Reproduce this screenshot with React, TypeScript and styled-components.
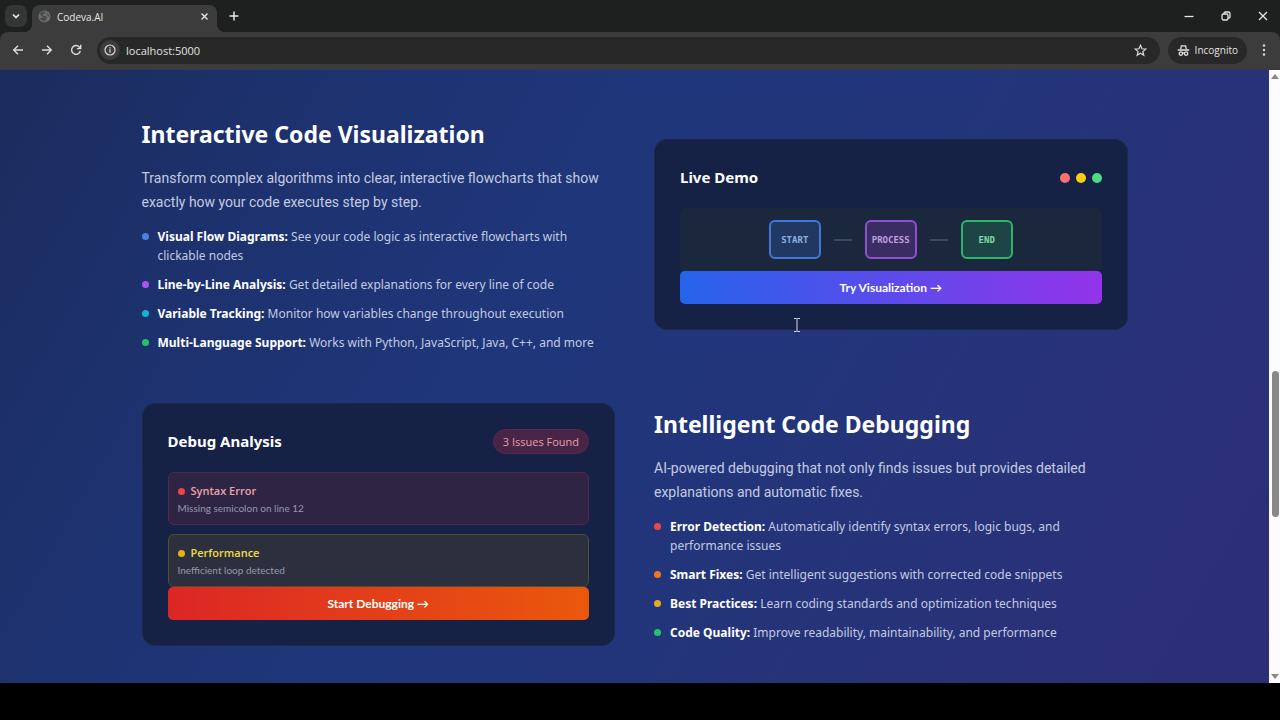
import React from "react";
import styled, { createGlobalStyle } from "styled-components";

const GlobalStyle = createGlobalStyle`
  *, *::before, *::after { box-sizing: border-box; }
  html, body { margin: 0; background: #000; }
  body, button, input { font-family: "Open Sans", "Noto Sans", sans-serif; }
  button { border: 0; padding: 0; margin: 0; background: none; color: inherit; cursor: pointer; }
  h2, h3, h4, p, ul { margin: 0; padding: 0; }
  ul { list-style: none; }
`;

const Window = styled.div`
  min-height: 100vh;
  display: flex;
  flex-direction: column;
  padding-bottom: 37px;
  background: #000;
`;

/* Browser frame */

const TabStrip = styled.header`
  height: 32px;
  display: flex;
  align-items: flex-start;
  padding: 5px 0 0 5px;
  background: #1e2020;
  color: #e6e6e6;
`;

const TabSearch = styled.button`
  width: 22px;
  height: 22px;
  display: grid;
  place-items: center;
  border-radius: 7px;
  background: #343535;
`;

const Tab = styled.div`
  position: relative;
  width: 185px;
  height: 27px;
  margin-left: 5px;
  padding: 0 6px 4px;
  display: flex;
  align-items: center;
  gap: 6px;
  border-radius: 8px 8px 0 0;
  background: #3c3c3c;
  font-size: 10px;

  &::before,
  &::after {
    content: "";
    position: absolute;
    bottom: 0;
    width: 8px;
    height: 8px;
  }
  &::before {
    left: -8px;
    background: radial-gradient(circle at 0 0, transparent 8px, #3c3c3c 8px);
  }
  &::after {
    right: -8px;
    background: radial-gradient(circle at 100% 0, transparent 8px, #3c3c3c 8px);
  }
`;

const TabTitle = styled.span`
  flex: 1;
`;

const IconButton = styled.button<{ $size?: number }>`
  width: ${({ $size = 14 }) => $size}px;
  height: ${({ $size = 14 }) => $size}px;
  display: grid;
  place-items: center;
  flex: none;
`;

const NewTab = styled(IconButton)`
  margin-left: 6px;
`;

const WindowControls = styled.div`
  margin-left: auto;
  display: flex;
  gap: 15px;
  padding-right: 6px;
`;

const Toolbar = styled.div`
  background: #1e2020;
`;

const ToolbarInner = styled.div`
  height: 38px;
  display: flex;
  align-items: center;
  padding: 0 7px 1px;
  border-radius: 8px 8px 0 0;
  border-bottom: 1px solid #34384a;
  background: #3c3c3c;
  color: #dcdcdc;
`;

const NavButtons = styled.nav`
  display: flex;
  gap: 7px;
  margin-right: 10px;
`;

const AddressBar = styled.div`
  flex: 1;
  min-width: 0;
  height: 27px;
  display: flex;
  align-items: center;
  gap: 6px;
  padding: 0 8px 0 3px;
  border-radius: 14px;
  background: #282828;
`;

const SiteInfo = styled(IconButton)`
  border-radius: 50%;
  background: #3c3c3c;
`;

const AddressInput = styled.input`
  flex: 1;
  min-width: 0;
  border: 0;
  outline: 0;
  padding: 0;
  background: transparent;
  color: #e3e3e3;
  font-size: 11px;
`;

const Incognito = styled.button`
  height: 27px;
  display: flex;
  align-items: center;
  gap: 5px;
  margin: 0 8px;
  padding: 0 9px;
  border-radius: 14px;
  background: #282828;
  color: #e3e3e3;
  font-size: 10px;
`;

const Viewport = styled.div`
  flex: 1;
  display: flex;
`;

const Scrollbar = styled.div`
  width: 11px;
  display: flex;
  flex-direction: column;
  align-items: center;
  padding: 4px 0 4px 1px;
  background: #fcfcfc;
`;

const Track = styled.div`
  flex: 1;
  width: 7px;
  display: flex;
  flex-direction: column;
  margin: 4px 0;
`;

const TrackSpace = styled.div`
  flex: 49 0 0;
`;

const Thumb = styled.div`
  flex: 25 0 0;
  border-radius: 4px;
  background: #888;
`;

const TrackRest = styled.div`
  flex: 26 0 0;
`;

/* Page */

const Page = styled.main`
  position: relative;
  flex: 1;
  min-width: 0;
  padding: 47px 24px 37px;
  background: linear-gradient(120deg, #1b2c5d 0%, #1d316d 18%, #1f367a 40%, #23357a 60%, #2a3178 85%, #2d2e78 100%);
`;

const Features = styled.div`
  max-width: 986px;
  margin: 0 auto;
  display: grid;
  row-gap: 51px;
`;

const FeatureRow = styled.section`
  display: grid;
  grid-template-columns: repeat(2, minmax(0, 1fr));
  column-gap: 39px;
  align-items: center;
`;

const Heading = styled.h2`
  margin-bottom: 15px;
  color: #fff;
  font-family: "Noto Sans", sans-serif;
  font-size: 23px;
  line-height: 34px;
  font-weight: 700;
`;

const Lead = styled.p`
  margin-bottom: 13px;
  color: #c3cbe0;
  font-family: Roboto, sans-serif;
  font-size: 14px;
  line-height: 24px;
`;

const BulletList = styled.ul`
  display: grid;
  row-gap: 10px;
`;

const BulletItem = styled.li`
  display: flex;
  gap: 9px;
  color: #c3cbe0;
  font-family: "Noto Sans", sans-serif;
  font-size: 12px;
  line-height: 19px;

  strong {
    color: #fff;
    font-weight: 700;
  }
`;

const Dot = styled.span<{ $color: string; $size?: number }>`
  flex: none;
  width: ${({ $size = 7 }) => $size}px;
  height: ${({ $size = 7 }) => $size}px;
  border-radius: 50%;
  background: ${({ $color }) => $color};
`;

const BulletDot = styled(Dot)`
  margin-top: 6px;
`;

const Card = styled.article`
  padding: 25px;
  border: 1px solid #1a2850;
  border-radius: 13px;
  background: #162146;
`;

const CardHeader = styled.header`
  min-height: 25px;
  display: flex;
  align-items: center;
  justify-content: space-between;
  margin-bottom: 18px;
`;

const CardTitle = styled.h3`
  color: #fff;
  font-family: "Noto Sans", sans-serif;
  font-size: 15px;
  line-height: 23px;
  font-weight: 700;
`;

const Lights = styled.div`
  display: flex;
  gap: 6px;
`;

const Badge = styled.span`
  padding: 3px 9px;
  border: 1px solid #57284a;
  border-radius: 13px;
  background: #482546;
  color: #e5a0ae;
  font-size: 11px;
  line-height: 17px;
`;

const Flow = styled.div`
  display: flex;
  align-items: center;
  justify-content: center;
  gap: 13px;
  padding: 12px;
  border-radius: 6px;
  background: #1b273d;
`;

const FlowNode = styled.div<{ $edge: string; $fill: string; $ink: string }>`
  width: 52px;
  height: 39px;
  display: grid;
  place-items: center;
  border: 2px solid ${({ $edge }) => $edge};
  border-radius: 6px;
  background: ${({ $fill }) => $fill};
  color: ${({ $ink }) => $ink};
  font-family: "DejaVu Sans Mono", monospace;
  font-size: 9px;
  font-weight: 700;
`;

const Connector = styled.div`
  width: 18px;
  height: 2px;
  background: #3b4760;
`;

const ActionButton = styled.button<{ $from: string; $to: string }>`
  display: block;
  width: 100%;
  height: 33px;
  border-radius: 5px;
  background: linear-gradient(90deg, ${({ $from }) => $from}, ${({ $to }) => $to});
  color: #fff;
  font-family: Lato, "Noto Sans", sans-serif;
  font-size: 12px;
  font-weight: 700;
`;

const Issues = styled.ul`
  display: grid;
  row-gap: 9px;
`;

const Issue = styled.li<{ $edge: string; $fill: string }>`
  padding: 9px 9px 7px;
  border: 1px solid ${({ $edge }) => $edge};
  border-radius: 6px;
  background: ${({ $fill }) => $fill};
`;

const IssueTitle = styled.h4<{ $ink: string }>`
  display: flex;
  align-items: center;
  gap: 6px;
  color: ${({ $ink }) => $ink};
  font-size: 11px;
  line-height: 18px;
  font-weight: 600;
`;

const IssueText = styled.p`
  color: #9599ae;
  font-family: Lato, sans-serif;
  font-size: 10px;
  line-height: 17px;
`;

const Caret = styled.svg`
  position: absolute;
  left: 793px;
  top: 248px;
`;

type Bullet = { color: string; title: string; text: string };

const visualBullets: Bullet[] = [
  { color: "#4a80ea", title: "Visual Flow Diagrams:", text: "See your code logic as interactive flowcharts with clickable nodes" },
  { color: "#a855f0", title: "Line-by-Line Analysis:", text: "Get detailed explanations for every line of code" },
  { color: "#12b4d2", title: "Variable Tracking:", text: "Monitor how variables change throughout execution" },
  { color: "#27c268", title: "Multi-Language Support:", text: "Works with Python, JavaScript, Java, C++, and more" },
];

const debugBullets: Bullet[] = [
  { color: "#ea4650", title: "Error Detection:", text: "Automatically identify syntax errors, logic bugs, and performance issues" },
  { color: "#ee7426", title: "Smart Fixes:", text: "Get intelligent suggestions with corrected code snippets" },
  { color: "#e5ab1e", title: "Best Practices:", text: "Learn coding standards and optimization techniques" },
  { color: "#27c268", title: "Code Quality:", text: "Improve readability, maintainability, and performance" },
];

function FeatureText({ title, lead, bullets }: { title: string; lead: string; bullets: Bullet[] }) {
  return (
    <div>
      <Heading>{title}</Heading>
      <Lead>{lead}</Lead>
      <BulletList>
        {bullets.map((b) => (
          <BulletItem key={b.title}>
            <BulletDot $color={b.color} />
            <span>
              <strong>{b.title}</strong> {b.text}
            </span>
          </BulletItem>
        ))}
      </BulletList>
    </div>
  );
}

function Stroke({ size, d, width = 1.4 }: { size: number; d: string; width?: number }) {
  return (
    <svg width={size} height={size} viewBox={`0 0 ${size} ${size}`} fill="none" stroke="currentColor" strokeWidth={width} aria-hidden="true">
      <path d={d} />
    </svg>
  );
}

function BrowserFrame() {
  return (
    <>
      <TabStrip>
        <TabSearch aria-label="Search tabs">
          <Stroke size={10} d="M2 3.5 5 6.5 8 3.5" width={1.7} />
        </TabSearch>
        <Tab>
          <svg width="13" height="13" viewBox="0 0 13 13" aria-hidden="true">
            <circle cx="6.5" cy="6.5" r="6" fill="#6c6f70" />
            <path d="M2 3.4C3.4 1.8 5.4 1.2 7.2 1.6L6.4 3.6 4.8 4.4 5.6 6H8L9 7.4 8 9.4 7 11.4C4.6 11.6 2.4 10 1.6 7.6L4 8.2 4.6 7 3 5.4Z" fill="#484a4b" />
            <path d="M8.6 3.2 10.6 4.2 11.4 6.6 9.8 6.2Z" fill="#484a4b" />
          </svg>
          <TabTitle>Codeva.AI</TabTitle>
          <IconButton $size={13} aria-label="Close tab">
            <Stroke size={9} d="M1.5 1.5 7.5 7.5M7.5 1.5 1.5 7.5" width={1.4} />
          </IconButton>
        </Tab>
        <NewTab $size={22} aria-label="New tab">
          <Stroke size={10} d="M5 .5V9.5M.5 5H9.5" width={1.5} />
        </NewTab>
        <WindowControls>
          <IconButton $size={22} aria-label="Minimize">
            <Stroke size={10} d="M.5 5.5H9.5" width={1.3} />
          </IconButton>
          <IconButton $size={22} aria-label="Restore">
            <svg width="10" height="10" viewBox="0 0 10 10" fill="none" stroke="currentColor" strokeWidth="1.3" aria-hidden="true">
              <rect x="1" y="3" width="6" height="6" rx="1.4" />
              <path d="M3 2.8V2.2C3 1.5 3.5 1 4.2 1H7.4C8.3 1 9 1.7 9 2.6V5.8C9 6.5 8.5 7 7.8 7H7.2" />
            </svg>
          </IconButton>
          <IconButton $size={22} aria-label="Close window">
            <Stroke size={10} d="M1 1 9 9M9 1 1 9" width={1.3} />
          </IconButton>
        </WindowControls>
      </TabStrip>
      <Toolbar>
        <ToolbarInner>
          <NavButtons>
            <IconButton $size={22} aria-label="Back">
              <Stroke size={12} d="M11 6H2M6 1.7 1.7 6 6 10.3" />
            </IconButton>
            <IconButton $size={22} aria-label="Forward">
              <Stroke size={12} d="M1 6H10M6 1.7 10.3 6 6 10.3" />
            </IconButton>
            <IconButton $size={22} aria-label="Reload">
              <Stroke size={12} d="M10.3 7A4.4 4.4 0 1 1 9.3 3L10.5 4.4M10.7 .8V4.6H6.9" />
            </IconButton>
          </NavButtons>
          <AddressBar>
            <SiteInfo $size={20} aria-label="Site information">
              <svg width="12" height="12" viewBox="0 0 12 12" fill="none" stroke="currentColor" strokeWidth="1.2" aria-hidden="true">
                <circle cx="6" cy="6" r="5" />
                <path d="M6 5.2V8.7M6 3.2V4.4" />
              </svg>
            </SiteInfo>
            <AddressInput aria-label="Address" defaultValue="localhost:5000" />
            <IconButton $size={22} aria-label="Bookmark this page">
              <svg width="13" height="13" viewBox="0 0 13 13" fill="none" stroke="currentColor" strokeWidth="1.2" aria-hidden="true">
                <path d="M6.5 1.3 8 4.8 11.8 5.1 8.9 7.6 9.8 11.3 6.5 9.3 3.2 11.3 4.1 7.6 1.2 5.1 5 4.8Z" />
              </svg>
            </IconButton>
          </AddressBar>
          <Incognito>
            <svg width="13" height="13" viewBox="0 0 13 13" fill="none" stroke="currentColor" strokeWidth="1.3" aria-hidden="true">
              <path d="M3.7 5.2 4.4 1.8H8.6L9.3 5.2" />
              <path d="M.8 6H12.2" strokeWidth="1.5" />
              <circle cx="3.9" cy="9.6" r="1.7" />
              <circle cx="9.1" cy="9.6" r="1.7" />
              <path d="M5.5 9.2Q6.5 8.6 7.5 9.2" />
            </svg>
            Incognito
          </Incognito>
          <IconButton $size={18} aria-label="Browser menu">
            <svg width="4" height="12" viewBox="0 0 4 12" fill="currentColor" aria-hidden="true">
              <circle cx="2" cy="1.5" r="1.2" />
              <circle cx="2" cy="6" r="1.2" />
              <circle cx="2" cy="10.5" r="1.2" />
            </svg>
          </IconButton>
        </ToolbarInner>
      </Toolbar>
    </>
  );
}

export default function App() {
  return (
    <Window>
      <GlobalStyle />
      <BrowserFrame />
      <Viewport>
        <Page>
          <Features>
            <FeatureRow>
              <FeatureText
                title="Interactive Code Visualization"
                lead="Transform complex algorithms into clear, interactive flowcharts that show exactly how your code executes step by step."
                bullets={visualBullets}
              />
              <Card>
                <CardHeader>
                  <CardTitle>Live Demo</CardTitle>
                  <Lights>
                    <Dot $size={10} $color="#f87171" />
                    <Dot $size={10} $color="#facc15" />
                    <Dot $size={10} $color="#4ade80" />
                  </Lights>
                </CardHeader>
                <Flow>
                  <FlowNode $edge="#3f78d6" $fill="#213862" $ink="#8db2e2">START</FlowNode>
                  <Connector />
                  <FlowNode $edge="#9150cf" $fill="#3a2d63" $ink="#bfa0e0">PROCESS</FlowNode>
                  <Connector />
                  <FlowNode $edge="#2eb567" $fill="#1d4545" $ink="#7fdba6">END</FlowNode>
                </Flow>
                <ActionButton $from="#2563eb" $to="#9333ea">Try Visualization →</ActionButton>
              </Card>
            </FeatureRow>
            <FeatureRow>
              <Card>
                <CardHeader>
                  <CardTitle>Debug Analysis</CardTitle>
                  <Badge>3 Issues Found</Badge>
                </CardHeader>
                <Issues>
                  <Issue $edge="#5a2448" $fill="#2e2444">
                    <IssueTitle $ink="#eba3ae">
                      <Dot $color="#ef4444" />
                      Syntax Error
                    </IssueTitle>
                    <IssueText>Missing semicolon on line 12</IssueText>
                  </Issue>
                  <Issue $edge="#50502f" $fill="#2c303e">
                    <IssueTitle $ink="#f2dc45">
                      <Dot $color="#e5b012" />
                      Performance
                    </IssueTitle>
                    <IssueText>Inefficient loop detected</IssueText>
                  </Issue>
                </Issues>
                <ActionButton $from="#dc2626" $to="#ea580c">Start Debugging →</ActionButton>
              </Card>
              <FeatureText
                title="Intelligent Code Debugging"
                lead="AI-powered debugging that not only finds issues but provides detailed explanations and automatic fixes."
                bullets={debugBullets}
              />
            </FeatureRow>
          </Features>
          <Caret width="8" height="14" viewBox="0 0 8 14" fill="none" stroke="#d5d7df" strokeWidth="1" aria-hidden="true">
            <path d="M1 .5H3.5L4 1 4.5 .5H7M4 1V13M1 13.5H3.5L4 13 4.5 13.5H7" />
          </Caret>
        </Page>
        <Scrollbar aria-hidden="true">
          <svg width="8" height="5" viewBox="0 0 8 5" fill="#888"><path d="M4 0 8 5H0Z" /></svg>
          <Track>
            <TrackSpace />
            <Thumb />
            <TrackRest />
          </Track>
          <svg width="8" height="5" viewBox="0 0 8 5" fill="#888"><path d="M4 5 8 0H0Z" /></svg>
        </Scrollbar>
      </Viewport>
    </Window>
  );
}
